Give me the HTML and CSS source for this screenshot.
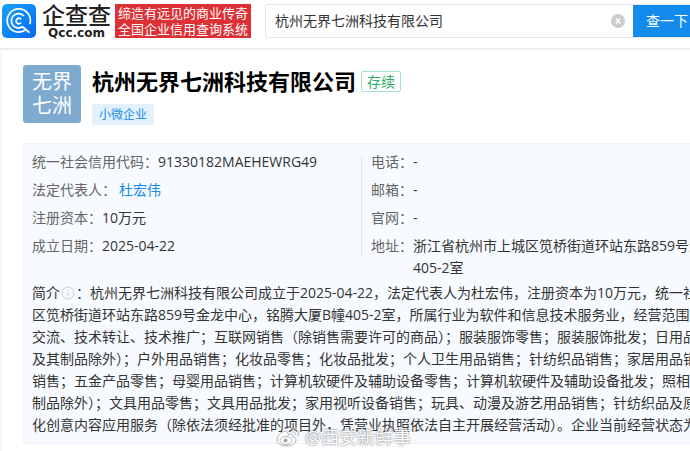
FILE: index.html
```html
<!DOCTYPE html>
<html lang="zh-CN">
<head>
  <meta charset="UTF-8">
  <meta name="viewport" content="width=device-width, initial-scale=1.0">
  <title>杭州无界七洲科技有限公司 - 企查查</title>
  <link rel="stylesheet" href="styles.css">
</head>
<body>
  <header class="header">
    <a class="brand" href="#">
      <svg class="brand-icon" viewBox="0 0 34 34" aria-hidden="true">
        <defs>
          <linearGradient id="brandBg" x1="0" y1="0" x2="1" y2="1">
            <stop offset="0" stop-color="#18a4fb"/>
            <stop offset="1" stop-color="#0568f6"/>
          </linearGradient>
        </defs>
        <rect width="34" height="34" rx="5" fill="url(#brandBg)"/>
        <g fill="none" stroke="#fff" stroke-linecap="round">
          <path d="M22.5 26.6A11.6 11.6 0 1 1 28 19.5" stroke-width="1.7"/>
          <path d="M20.5 22.8A7.2 7.2 0 1 1 21.5 11.5" stroke-width="1.7"/>
          <path d="M18.7 19A2.7 2.7 0 1 1 18.7 15" stroke-width="1.6"/>
          <path d="M20.5 22.8L27 28.2" stroke-width="1.8"/>
        </g>
      </svg>
      <span class="brand-text">
        <span class="brand-name">企查查</span>
        <span class="brand-domain">Qcc.com</span>
      </span>
    </a>
    <div class="slogan">缔造有远见的商业传奇<br>全国企业信用查询系统</div>
    <form class="search">
      <input class="search-input" type="text" aria-label="搜索企业" value="杭州无界七洲科技有限公司">
      <button class="search-clear" type="button" aria-label="清空">
        <svg viewBox="0 0 14 14"><circle cx="7" cy="7" r="7" fill="#ccc"/><path d="M5 4.5L9 9.5M9 4.5L5 9.5" stroke="#fff" stroke-width="1.4"/></svg>
      </button>
      <button class="search-btn" type="submit">查一下</button>
    </form>
  </header>

  <main class="main">
    <section class="company">
      <div class="company-logo">无界<br>七洲</div>
      <div class="company-head">
        <div class="company-title">
          <h1>杭州无界七洲科技有限公司</h1>
          <span class="status">存续</span>
        </div>
        <span class="tag">小微企业</span>
      </div>
    </section>

    <section class="card">
      <div class="info">
        <dl class="info-col">
          <div class="row"><dt>统一社会信用代码：</dt><dd>91330182MAEHEWRG49</dd></div>
          <div class="row"><dt>法定代表人：</dt><dd><a class="person" href="#">杜宏伟</a></dd></div>
          <div class="row"><dt>注册资本：</dt><dd>10万元</dd></div>
          <div class="row"><dt>成立日期：</dt><dd>2025-04-22</dd></div>
        </dl>
        <dl class="info-col info-contact">
          <div class="row"><dt>电话：</dt><dd>-</dd></div>
          <div class="row"><dt>邮箱：</dt><dd>-</dd></div>
          <div class="row"><dt>官网：</dt><dd>-</dd></div>
          <div class="row"><dt>地址：</dt><dd>浙江省杭州市上城区笕桥街道环站东路859号金<br>405-2室</dd></div>
        </dl>
      </div>
      <p class="intro">简介<svg class="intro-icon" viewBox="0 0 14 14" aria-hidden="true"><circle cx="7" cy="7" r="6" fill="none" stroke="#ccc"/><path d="M7 3.5V5M7 6V10.5" stroke="#ccc"/></svg>：杭州无界七洲科技有限公司成立于2025-04-22，法定代表人为杜宏伟，注册资本为10万元，统一社<br>
        区笕桥街道环站东路859号金龙中心，铭腾大厦B幢405-2室，所属行业为软件和信息技术服务业，经营范围包<br>
        交流、技术转让、技术推广；互联网销售（除销售需要许可的商品）；服装服饰零售；服装服饰批发；日用品<br>
        及其制品除外）；户外用品销售；化妆品零售；化妆品批发；个人卫生用品销售；针纺织品销售；家居用品销<br>
        销售；五金产品零售；母婴用品销售；计算机软硬件及辅助设备零售；计算机软硬件及辅助设备批发；照相机<br>
        制品除外）；文具用品零售；文具用品批发；家用视听设备销售；玩具、动漫及游艺用品销售；针纺织品及原<br>
        化创意内容应用服务（除依法须经批准的项目外，凭营业执照依法自主开展经营活动）。企业当前经营状态为</p>
    </section>
  </main>

  <div class="watermark">
    <svg class="watermark-icon" viewBox="0 0 24 20" aria-hidden="true">
      <path d="M9 4C5 5 1 9 1 13C1 17 6 19 10 19C16 19 20 16 20 13C20 11 18 10 17 10C17 8 16 6 12 8C12 6 12 4 9 4Z" fill="#fff" stroke="#aaa"/>
      <ellipse cx="10" cy="13.5" rx="6" ry="4" fill="#fff" stroke="#aaa"/>
      <circle cx="9.5" cy="13.5" r="2" fill="#999"/>
      <path d="M15 2C20 0 24 5 22 9M16 5C18 4 20 6 19 8" fill="none" stroke="#aaa" stroke-linecap="round"/>
    </svg>
    <span>@西安新鲜事</span>
  </div>
</body>
</html>
```
FILE: styles.css
```css
:root {
  --blue: #128bed;
  --text: #333;
  --label: #666;
  --line: #eee;
  --font: "Open Sans", "Noto Sans CJK SC", sans-serif;
}
* {
  box-sizing: border-box;
}
body {
  margin: 0;
  font-family: var(--font);
  font-size: 14px;
  line-height: 22px;
  color: var(--text);
  background: #fff;
  overflow: hidden;
}
a {
  text-decoration: none;
}
h1, dl, dd, p {
  margin: 0;
}

/* header */
.header {
  display: flex;
  align-items: flex-start;
  height: 50px;
  padding: 4px 0 0 2px;
  border-bottom: 2px solid var(--line);
}
.brand {
  display: flex;
  gap: 6px;
  color: #222;
}
.brand-icon {
  width: 34px;
  height: 34px;
}
.brand-text {
  display: flex;
  flex-direction: column;
}
.brand-name {
  font-size: 23px;
  line-height: 22px;
  font-weight: 500;
}
.brand-domain {
  font-family: "DejaVu Sans", sans-serif;
  font-size: 12px;
  line-height: 14px;
  font-weight: bold;
  text-align: center;
}
.slogan {
  margin-left: 4px;
  padding: 1px 3px;
  font-size: 13px;
  line-height: 16px;
  white-space: nowrap;
  color: #fff;
  background: #dd3034;
}
.search {
  display: flex;
  flex: 1;
  min-width: 0;
  height: 34px;
  margin-left: 14px;
  border: 1px solid #e6e6e6;
  border-right: 0;
  border-radius: 3px 0 0 3px;
}
.search-input {
  flex: 1;
  min-width: 0;
  padding: 0 9px;
  border: 0;
  outline: 0;
  font: inherit;
  color: var(--text);
  background: none;
}
.search-clear {
  display: flex;
  align-items: center;
  padding: 0 8px;
  border: 0;
  background: none;
  cursor: pointer;
}
.search-clear svg {
  width: 14px;
  height: 14px;
}
.search-btn {
  padding: 0 2px 0 13px;
  border: 0;
  font: inherit;
  white-space: nowrap;
  color: #fff;
  background: var(--blue);
  cursor: pointer;
}

/* company */
.main {
  padding: 15px 0 7px 21px;
  border-left: 2px solid #f5f5f5;
}
.company {
  display: flex;
  gap: 11px;
}
.company-logo {
  width: 58px;
  height: 58px;
  padding: 5px 0;
  border-radius: 3px;
  font-size: 20px;
  line-height: 24px;
  text-align: center;
  color: #fff;
  background: #7eaad0;
}
.company-title {
  display: flex;
  align-items: center;
  gap: 5px;
  height: 32px;
  margin-bottom: 6px;
}
.company-title h1 {
  font-size: 22px;
  line-height: 32px;
  font-weight: bold;
  color: #000;
  white-space: nowrap;
}
.status {
  padding: 0 5px;
  border: 1px solid #a5e3c3;
  border-radius: 2px;
  font-size: 14px;
  line-height: 19px;
  color: #2bae6a;
}
.tag {
  display: inline-block;
  padding: 0 7px;
  border-radius: 2px;
  font-size: 12px;
  line-height: 21px;
  color: var(--blue);
  background: #e4f1fd;
}

/* detail card */
.card {
  margin-top: 18px;
  padding: 7px 0 7px 8px;
  border: 1px solid #eef3f8;
  border-right: 0;
  border-radius: 3px 0 0 3px;
  white-space: nowrap;
  overflow: hidden;
  background: #f7fbff;
}
.info {
  display: grid;
  grid-template-columns: 1fr 1fr;
}
.info-col {
  display: flex;
  flex-direction: column;
  gap: 6px;
  min-width: 0;
}
.info-contact {
  position: relative;
  padding-left: 10px;
}
.info-contact::before {
  content: "";
  position: absolute;
  left: 0;
  top: 5px;
  bottom: 22px;
  border-left: 1px solid #e3e8ee;
}
.row {
  display: flex;
}
.row dt {
  color: var(--label);
}
.person {
  margin-left: 3px;
  color: var(--blue);
}
.intro {
  margin-top: 3px;
}
.intro-icon {
  width: 14px;
  height: 14px;
  margin: 0 1px;
  vertical-align: -2px;
}

.watermark {
  position: absolute;
  left: 40%;
  bottom: 3px;
  display: flex;
  align-items: center;
  gap: 5px;
  font-size: 18px;
  color: #fff;
  text-shadow: 0 0 2px #777, 0 0 1px #999;
  opacity: 0.9;
}
.watermark-icon {
  width: 24px;
  height: 20px;
}
```
